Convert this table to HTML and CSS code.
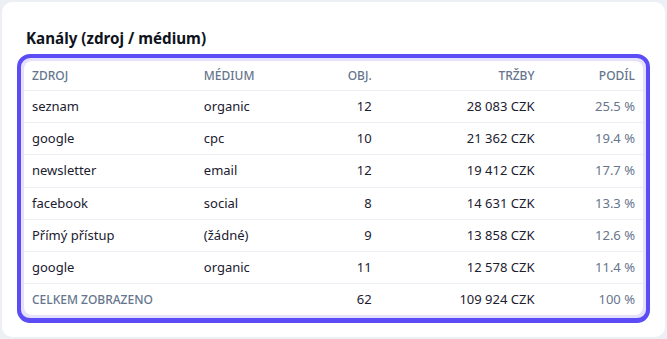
FILE: index.html
```html
<!DOCTYPE html>
<html lang="cs">
<head>
<meta charset="utf-8">
<link rel="stylesheet" href="styles.css">
</head>
<body>
<div class="card">
  <h2 class="title">Kanály (zdroj / médium)</h2>
  <div class="frame">
    <div class="inner">
      <table class="tbl">
        <colgroup>
          <col class="c1"><col class="c2"><col class="c3"><col class="c4"><col class="c5">
        </colgroup>
        <thead>
          <tr><th>Zdroj</th><th>Médium</th><th class="r">Obj.</th><th class="r">Tržby</th><th class="r">Podíl</th></tr>
        </thead>
        <tbody>
          <tr><td>seznam</td><td>organic</td><td class="r">12</td><td class="r">28 083 CZK</td><td class="r pct">25.5 %</td></tr>
          <tr><td>google</td><td>cpc</td><td class="r">10</td><td class="r">21 362 CZK</td><td class="r pct">19.4 %</td></tr>
          <tr><td>newsletter</td><td>email</td><td class="r">12</td><td class="r">19 412 CZK</td><td class="r pct">17.7 %</td></tr>
          <tr><td>facebook</td><td>social</td><td class="r">8</td><td class="r">14 631 CZK</td><td class="r pct">13.3 %</td></tr>
          <tr><td>Přímý přístup</td><td>(žádné)</td><td class="r">9</td><td class="r">13 858 CZK</td><td class="r pct">12.6 %</td></tr>
          <tr><td>google</td><td>organic</td><td class="r">11</td><td class="r">12 578 CZK</td><td class="r pct">11.4 %</td></tr>
        </tbody>
        <tfoot>
          <tr><td class="lbl" colspan="2">Celkem zobrazeno</td><td class="r">62</td><td class="r">109 924 CZK</td><td class="r pct">100 %</td></tr>
        </tfoot>
      </table>
    </div>
  </div>
</div>
</body>
</html>
```
FILE: styles.css
```css
html, body {
  margin: 0;
  padding: 0;
}
body {
  background: #eceff4;
  padding: 2px;
  font-family: "Noto Sans", "Open Sans", sans-serif;
  color: #1b2030;
}
.card {
  background: #ffffff;
  border-radius: 10px;
  height: 335px;
  box-sizing: border-box;
  padding: 26px 15px 15px 15px;
}
.title {
  margin: 0 0 5px 9px;
  font-size: 15.2px;
  line-height: 21px;
  font-weight: 700;
  color: #0f1320;
}
.frame {
  border: 4px solid #5b4cf6;
  border-bottom-width: 5px;
  border-radius: 13px;
  background: #e4e0fd;
  padding: 3px;
}
.inner {
  background: #ffffff;
  border-radius: 8px;
  overflow: hidden;
}
.tbl {
  width: 100%;
  border-collapse: collapse;
  table-layout: fixed;
  font-size: 13px;
}
.c1 { width: 171px; }
.c2 { width: 120px; }
.c3 { width: 63px; }
.c4 { width: 162px; }
.c5 { width: 100px; }
.tbl th {
  text-align: left;
  font-weight: 500;
  font-size: 12px;
  text-transform: uppercase;
  color: #66758d;
  line-height: 19px;
  padding: 5px 8px 5px 8px;
  border-bottom: 1px solid #eceef3;
}
.tbl td {
  line-height: 19.2px;
  padding: 6px 8px;
  border-bottom: 1px solid #eceef3;
  white-space: nowrap;
}
.tbl tfoot td {
  border-bottom: none;
  padding: 6px 8px 6px 8px;
}
.tbl .r { text-align: right; }
.tbl .pct { color: #66758d; }
.tbl td.lbl {
  font-size: 12px;
  text-transform: uppercase;
  color: #66758d;
  font-weight: 500;
}
```
